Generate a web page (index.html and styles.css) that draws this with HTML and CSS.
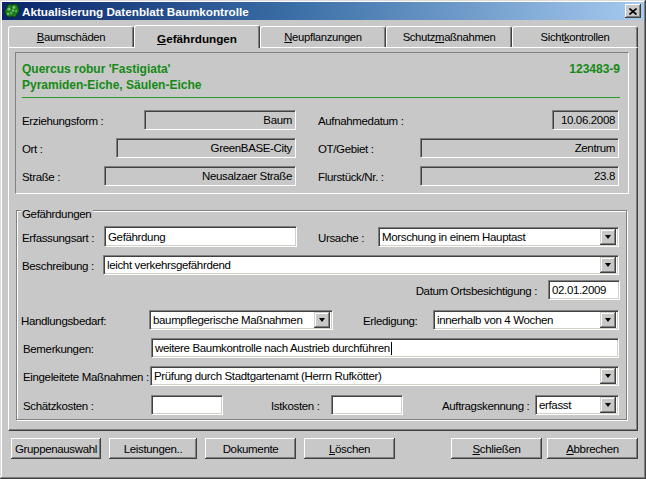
FILE: index.html
```html
<!DOCTYPE html>
<html lang="de">
<head>
<meta charset="utf-8">
<title>Aktualisierung Datenblatt Baumkontrolle</title>
<link rel="stylesheet" href="styles.css">
</head>
<body>
<div class="window">
  <div class="titlebar">
    <svg class="appicon" width="16" height="16" viewBox="0 0 16 16">
      <path d="M3 5 C2 2 6 0 8 2 C10 0 14 1 14 4 C16 6 15 10 13 11 C13 14 9 15 8 13 C6 15 2 14 2 11 C0 10 1 6 3 5 Z" fill="#1f7a1f" stroke="#0b3d0b" stroke-width="1"/>
      <circle cx="5" cy="6" r="1.6" fill="#6cc86c"/>
      <circle cx="10" cy="4.5" r="1.4" fill="#6cc86c"/>
      <circle cx="12" cy="8" r="1.3" fill="#4fae4f"/>
      <circle cx="7" cy="10" r="1.5" fill="#4fae4f"/>
      <circle cx="4" cy="11" r="1" fill="#8ee08e"/>
      <circle cx="9" cy="7.5" r="1" fill="#8ee08e"/>
    </svg>
    <span class="title">Aktualisierung Datenblatt Baumkontrolle</span>
    <span class="closebtn">
      <svg width="8" height="7" viewBox="0 0 8 7"><path d="M0.5 0.5 L7.5 6.5 M7.5 0.5 L0.5 6.5" stroke="#000" stroke-width="1.6"/></svg>
    </span>
  </div>

  <div class="tabs">
    <div class="tab"><span><u>B</u>aumschäden</span></div>
    <div class="tab active"><span><u>G</u>efährdungen</span></div>
    <div class="tab"><span><u>N</u>eupflanzungen</span></div>
    <div class="tab"><span>Schutz<u>m</u>aßnahmen</span></div>
    <div class="tab"><span>Sicht<u>k</u>ontrollen</span></div>
  </div>

  <div class="panel">
    <div class="infobox">
      <div class="species">
        <div class="sp-line"><span>Quercus robur 'Fastigiata'</span><span>123483-9</span></div>
        <div class="sp-line"><span>Pyramiden-Eiche, Säulen-Eiche</span></div>
      </div>
      <div class="rule"></div>
      <div class="inforow first">
        <div class="cell"><span class="lbl">Erziehungsform :</span><span class="ro w152">Baum</span></div>
        <div class="cell"><span class="lbl">Aufnahmedatum :</span><span class="ro w67">10.06.2008</span></div>
      </div>
      <div class="inforow">
        <div class="cell"><span class="lbl">Ort :</span><span class="ro w180">GreenBASE-City</span></div>
        <div class="cell"><span class="lbl">OT/Gebiet :</span><span class="ro w199">Zentrum</span></div>
      </div>
      <div class="inforow">
        <div class="cell"><span class="lbl">Straße :</span><span class="ro w192">Neusalzaer Straße</span></div>
        <div class="cell"><span class="lbl">Flurstück/Nr. :</span><span class="ro w199">23.8</span></div>
      </div>
    </div>

    <div class="group">
      <span class="legend">Gefährdungen</span>

      <div class="frow ra">
        <span class="lbl l82">Erfassungsart :</span>
        <span class="edit w193 h21">Gefährdung</span>
        <span class="lbl l60 ml21">Ursache :</span>
        <span class="combo w241"><span class="val">Morschung in einem Hauptast</span><span class="ddbtn"></span></span>
      </div>

      <div class="frow rb">
        <span class="lbl l81">Beschreibung :</span>
        <span class="combo w516"><span class="val">leicht verkehrsgefährdend</span><span class="ddbtn"></span></span>
      </div>

      <div class="frow rc">
        <span class="lbl">Datum Ortsbesichtigung :</span>
        <span class="edit w72 ml11">02.01.2009</span>
      </div>

      <div class="frow rd">
        <span class="lbl l128">Handlungsbedarf:</span>
        <span class="combo w184"><span class="val">baumpflegerische Maßnahmen</span><span class="ddbtn"></span></span>
        <span class="lbl l70 ml30">Erledigung:</span>
        <span class="combo w186"><span class="val">innerhalb von 4 Wochen</span><span class="ddbtn"></span></span>
      </div>

      <div class="frow re">
        <span class="lbl l128">Bemerkungen:</span>
        <span class="edit w468">weitere Baumkontrolle nach Austrieb durchführen<span class="caret"></span></span>
      </div>

      <div class="frow rf">
        <span class="lbl l127">Eingeleitete Maßnahmen :</span>
        <span class="combo w469"><span class="val">Prüfung durch Stadtgartenamt (Herrn Rufkötter)</span><span class="ddbtn"></span></span>
      </div>

      <div class="frow rg">
        <span class="lbl l128">Schätzkosten :</span>
        <span class="edit w72"></span>
        <span class="lbl l60 ml48">Istkosten :</span>
        <span class="edit w72"></span>
        <span class="lbl l93 ml39">Auftragskennung :</span>
        <span class="combo w84"><span class="val">erfasst</span><span class="ddbtn"></span></span>
      </div>
    </div>
  </div>

  <div class="buttons">
    <div class="btngroup">
      <span class="btn b90">Gruppenauswahl</span>
      <span class="btn b88">Leistungen..</span>
      <span class="btn b91">Dokumente</span>
      <span class="btn b91"><u>L</u>öschen</span>
    </div>
    <div class="btngroup right">
      <span class="btn b91"><u>S</u>chließen</span>
      <span class="btn b91"><u>A</u>bbrechen</span>
    </div>
  </div>
</div>
</body>
</html>
```

FILE: styles.css
```css
html, body {
  margin: 0;
  padding: 0;
  background: #c8c8c8;
}

body {
  width: 646px;
  height: 479px;
  overflow: hidden;
  font-family: "Liberation Sans", Arial, sans-serif;
  font-size: 11.5px;
  letter-spacing: -0.35px;
  color: #000;
}

.window {
  box-sizing: border-box;
  width: 646px;
  height: 479px;
  padding: 2px;
  background: #c8c8c8;
  box-shadow: inset -1px -1px #404040, inset 1px 1px #dcdcdc, inset -2px -2px #808080, inset 2px 2px #ffffff;
}

/* title bar */
.titlebar {
  height: 18px;
  display: flex;
  align-items: center;
  background: linear-gradient(to right, #0a246a 0%, #3a6ea5 45%, #a6caf0 100%);
}

.appicon {
  margin-left: 2px;
  flex: 0 0 16px;
}

.title {
  margin-left: 2px;
  font-weight: bold;
  font-size: 11.7px;
  letter-spacing: 0;
  color: #fff;
  white-space: nowrap;
}

.closebtn {
  margin-left: auto;
  margin-right: 3px;
  box-sizing: border-box;
  width: 16px;
  height: 14px;
  display: flex;
  align-items: center;
  justify-content: center;
  background: #c8c8c8;
  box-shadow: inset -1px -1px #404040, inset 1px 1px #ffffff, inset -2px -2px #808080;
}

/* tabs */
.tabs {
  display: flex;
  align-items: flex-end;
  height: 27px;
  margin-left: 6px;
}

.tab {
  box-sizing: border-box;
  flex: 0 0 126px;
  height: 21px;
  border-top: 1px solid #fff;
  border-left: 1px solid #fff;
  border-right: 1px solid #404040;
  border-radius: 3px 3px 0 0;
  box-shadow: inset -1px 0 #808080;
  background: #c8c8c8;
  display: flex;
  align-items: center;
  justify-content: center;
  font-size: 11.3px;
  white-space: nowrap;
}

.tab.active {
  height: 23px;
  margin-bottom: -1px;
  position: relative;
  z-index: 2;
  font-weight: bold;
  font-size: 11.7px;
  letter-spacing: 0;
}

.tab.active span {
  margin-top: 3px;
}

/* panel */
.panel {
  box-sizing: border-box;
  margin: 0 6px;
  height: 384px;
  padding: 4px 8px 0 6px;
  border-top: 1px solid #fff;
  border-left: 1px solid #fff;
  border-right: 1px solid #404040;
  border-bottom: 1px solid #404040;
  box-shadow: inset -1px -1px #808080;
}

.infobox {
  box-sizing: border-box;
  height: 142px;
  padding: 8px 8px 0 6px;
  border-top: 1px solid #808080;
  border-left: 1px solid #808080;
  border-right: 1px solid #fff;
  border-bottom: 1px solid #fff;
}

.species {
  font-weight: bold;
  font-size: 12px;
  letter-spacing: 0;
  color: #148a14;
}

.sp-line {
  height: 16px;
  line-height: 16px;
  display: flex;
  justify-content: space-between;
}

.rule {
  margin-top: 4px;
  height: 1px;
  background: #2a9a2a;
}

.inforow {
  display: grid;
  grid-template-columns: 274px 301px;
  column-gap: 22px;
  height: 20px;
  margin-top: 8px;
}

.inforow.first {
  margin-top: 12px;
}

.cell {
  display: flex;
  align-items: center;
}

.cell .lbl {
  flex: 1;
}

.lbl {
  white-space: nowrap;
  padding-top: 2px;
}

.ro {
  box-sizing: border-box;
  height: 20px;
  border-top: 1px solid #808080;
  border-left: 1px solid #808080;
  border-right: 1px solid #fff;
  border-bottom: 1px solid #fff;
  box-shadow: inset 1px 1px #404040;
  text-align: right;
  padding-right: 3px;
  line-height: 18px;
  white-space: nowrap;
}

/* group box */
.group {
  box-sizing: border-box;
  margin: 16px 2px 0 1px;
  height: 210px;
  border: 1px solid #808080;
  box-shadow: inset 1px 1px #fff, 1px 1px #fff;
}

.legend {
  display: block;
  width: max-content;
  height: 15px;
  line-height: 15px;
  margin: -4px 0 0 4px;
  padding: 0 2px 0 1px;
  background: #c8c8c8;
}

.frow {
  display: flex;
  align-items: center;
  height: 20px;
  padding-left: 5px;
  padding-right: 6px;
}

.ra { margin-top: 4px; height: 21px; }
.rb { margin-top: 8px; }
.rc { margin-top: 5px; justify-content: flex-end; }
.rd { margin-top: 10px; padding-left: 4px; }
.re { margin-top: 8px; padding-left: 6px; }
.rf { margin-top: 8px; padding-left: 6px; }
.rg { margin-top: 9px; padding-left: 6px; }

.edit, .combo {
  box-sizing: border-box;
  height: 20px;
  background: #fff;
  border-top: 1px solid #808080;
  border-left: 1px solid #808080;
  border-right: 1px solid #fff;
  border-bottom: 1px solid #fff;
  box-shadow: inset 1px 1px #404040, inset -1px -1px #d4d0c8;
  white-space: nowrap;
  overflow: hidden;
}

.edit {
  padding-left: 3px;
  line-height: 18px;
  display: flex;
  align-items: center;
}

.h21 { height: 21px; }

.caret {
  display: inline-block;
  width: 1px;
  height: 13px;
  background: #000;
  margin-left: 1px;
}

.combo {
  display: flex;
  align-items: center;
  padding: 2px;
}

.combo .val {
  flex: 1;
  padding-left: 1px;
  overflow: hidden;
}

.ddbtn {
  flex: 0 0 16px;
  box-sizing: border-box;
  height: 16px;
  background: #c8c8c8;
  box-shadow: inset -1px -1px #404040, inset 1px 1px #d4d0c8, inset -2px -2px #808080, inset 2px 2px #fff;
  display: flex;
  align-items: center;
  justify-content: center;
}

.ddbtn::after {
  content: "";
  width: 0;
  height: 0;
  border-left: 3.5px solid transparent;
  border-right: 3.5px solid transparent;
  border-top: 4px solid #000;
  margin-left: -1px;
}

/* widths */
.w67 { width: 67px; }
.w72 { width: 72px; }
.w84 { width: 84px; }
.w152 { width: 152px; }
.w180 { width: 180px; }
.w184 { width: 184px; }
.w186 { width: 186px; }
.w192 { width: 192px; }
.w193 { width: 193px; }
.w199 { width: 199px; }
.w241 { width: 241px; }
.w468 { width: 468px; }
.w469 { width: 469px; }
.w516 { width: 516px; }

.l60 { width: 60px; }
.l70 { width: 70px; }
.l81 { width: 81px; }
.l82 { width: 82px; }
.l93 { width: 93px; }
.l127 { width: 127px; }
.l128 { width: 128px; }

.ml11 { margin-left: 11px; }
.ml21 { margin-left: 21px; }
.ml30 { margin-left: 30px; }
.ml39 { margin-left: 39px; }
.ml48 { margin-left: 48px; }

/* bottom buttons */
.buttons {
  display: flex;
  margin-top: 7px;
  padding: 0 6px 0 9px;
}

.btngroup {
  display: flex;
  gap: 8px;
}

.btngroup.right {
  margin-left: auto;
  gap: 5px;
}

.btn {
  box-sizing: border-box;
  height: 21px;
  display: flex;
  align-items: center;
  justify-content: center;
  background: #c8c8c8;
  box-shadow: inset -1px -1px #404040, inset 1px 1px #ffffff, inset -2px -2px #808080;
  white-space: nowrap;
}

.b88 { width: 88px; }
.b90 { width: 90px; }
.b91 { width: 91px; }
```
